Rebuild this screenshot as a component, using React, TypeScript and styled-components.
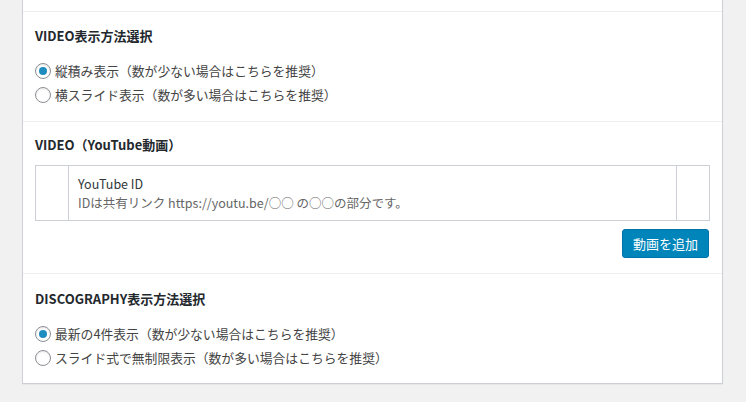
import React from "react";
import styled, { createGlobalStyle } from "styled-components";

const Global = createGlobalStyle`
  html, body { margin: 0; padding: 0; background: #f1f1f1; }
  body {
    font-family: "Noto Sans CJK JP", "Noto Sans", sans-serif;
    font-size: 13px;
    color: #444;
  }
`;

const Page = styled.div`
  width: 746px;
  height: 402px;
  overflow: hidden;
  padding: 0 0 0 22px;
  box-sizing: border-box;
`;

const Panel = styled.div`
  width: 701px;
  box-sizing: border-box;
  background: #fff;
  border: 1px solid #ccd0d4;
  border-top: none;
  box-shadow: 0 1px 1px rgba(0, 0, 0, 0.04);
`;

const Section = styled.div<{ $pt?: number; $pb?: number; $h?: number }>`
  padding: ${(p) => p.$pt ?? 15}px 12px ${(p) => p.$pb ?? 14}px 12px;
  border-bottom: 1px solid #eeeeee;
  ${(p) => (p.$h !== undefined ? `height: ${p.$h}px; padding: 0; box-sizing: border-box;` : "")}
  &:last-child { border-bottom: none; }
`;

const Heading = styled.h3`
  margin: 0;
  font-size: 13px;
  line-height: 18px;
  font-weight: 700;
  color: #23282d;
`;

const RadioList = styled.div<{ $mt?: number }>`
  display: flex;
  flex-direction: column;
  margin-top: ${(p) => p.$mt ?? 14}px;
`;

const RadioRow = styled.label`
  display: flex;
  align-items: center;
  gap: 4px;
  height: 24px;
  line-height: 18px;
  font-size: 12.8px;
  color: #444;
  cursor: pointer;
`;

const Circle = styled.span<{ $checked?: boolean }>`
  width: 16px;
  height: 16px;
  box-sizing: border-box;
  border-radius: 50%;
  border: 1px solid #8c8f94;
  background: #fff;
  box-shadow: inset 0 1px 2px rgba(0, 0, 0, 0.1);
  display: flex;
  align-items: center;
  justify-content: center;
  flex: none;
  &::after {
    content: "";
    width: 8px;
    height: 8px;
    border-radius: 50%;
    background: #1e8cbe;
    display: ${(p) => (p.$checked ? "block" : "none")};
  }
`;

const Table = styled.table`
  margin-top: 11px;
  width: 100%;
  border-collapse: collapse;
  border: 1px solid #ccd0d4;
`;

const Cell = styled.td<{ $w?: number }>`
  border: 1px solid #ccd0d4;
  padding: 8px 9px;
  vertical-align: top;
  font-size: 12.5px;
  ${(p) => (p.$w ? `width: ${p.$w}px; padding: 0;` : "")}
`;

const FieldLabel = styled.div`
  line-height: 19px;
  color: #32373c;
`;

const FieldDesc = styled.div`
  line-height: 19px;
  color: #666;
`;

const Actions = styled.div`
  display: flex;
  justify-content: flex-end;
  margin-top: 8px;
  padding-right: 1px;
`;

const Button = styled.button`
  font-family: inherit;
  font-size: 13px;
  height: 29px;
  width: 87px;
  padding: 0 10px;
  border: 1px solid #0073aa;
  border-radius: 3px;
  background: #0085ba;
  color: #fff;
  cursor: pointer;
`;

const Radio = ({ checked, children }: { checked?: boolean; children: React.ReactNode }) => (
  <RadioRow>
    <Circle $checked={checked} />
    <span>{children}</span>
  </RadioRow>
);

export default function App() {
  return (
    <Page>
      <Global />
      <Panel>
        <Section $h={12} />
        <Section $pt={15} $pb={14}>
          <Heading>VIDEO表示方法選択</Heading>
          <RadioList $mt={14}>
            <Radio checked>縦積み表示（数が少ない場合はこちらを推奨）</Radio>
            <Radio>横スライド表示（数が多い場合はこちらを推奨）</Radio>
          </RadioList>
        </Section>
        <Section $pt={14} $pb={15}>
          <Heading>VIDEO（YouTube動画）</Heading>
          <Table>
            <tbody>
              <tr>
                <Cell $w={32} />
                <Cell>
                  <FieldLabel>YouTube ID</FieldLabel>
                  <FieldDesc>IDは共有リンク https://youtu.be/○○ の○○の部分です。</FieldDesc>
                </Cell>
                <Cell $w={32} />
              </tr>
            </tbody>
          </Table>
          <Actions>
            <Button>動画を追加</Button>
          </Actions>
        </Section>
        <Section $pt={16} $pb={13}>
          <Heading>DISCOGRAPHY表示方法選択</Heading>
          <RadioList $mt={14}>
            <Radio checked>最新の4件表示（数が少ない場合はこちらを推奨）</Radio>
            <Radio>スライド式で無制限表示（数が多い場合はこちらを推奨）</Radio>
          </RadioList>
        </Section>
      </Panel>
    </Page>
  );
}
